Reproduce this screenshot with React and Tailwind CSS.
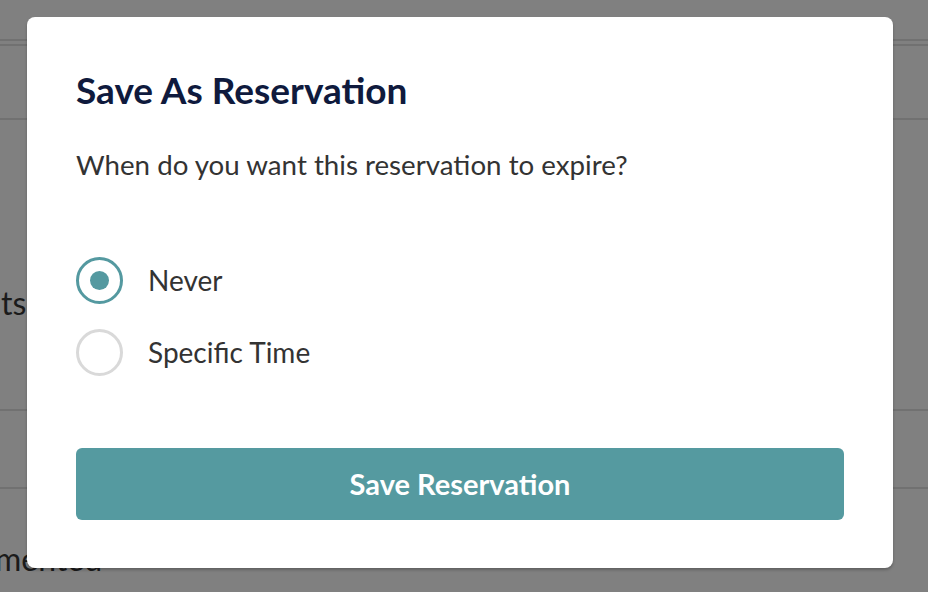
import React from "react";

function Radio({ checked, label }) {
    return (
        <label className="flex items-center h-[48px] gap-[25px] cursor-pointer">
            <span
                className={`flex items-center justify-center w-[47px] h-[47px] rounded-full border-[3px] ${
                    checked ? "border-[#5499a0]" : "border-[#d9d9d9]"
                }`}
            >
                {checked && <span className="w-[19px] h-[19px] rounded-full bg-[#5499a0]" />}
            </span>
            <span className="text-[28px] leading-[34px] text-[#333333]">{label}</span>
        </label>
    );
}

export default function App() {
    return (
        <div className="relative w-[928px] h-[592px] overflow-hidden bg-[#808080] font-['Lato',sans-serif]">
            {/* page behind the overlay */}
            <div className="flex flex-col">
                <div className="h-[39px]" />
                <div className="h-[2px] bg-[#717171]" />
                <div className="h-[3px]" />
                <div className="h-[2px] bg-[#717171]" />
                <div className="h-[72px]" />
                <div className="h-[2px] bg-[#717171]" />
                <div className="h-[289px] pt-[164px] pl-[1px] text-[32px] leading-[38px] text-[#1b1b1b]">ts</div>
                <div className="h-[2px] bg-[#717171]" />
                <div className="h-[76px]" />
                <div className="h-[2px] bg-[#717171]" />
                <div className="pt-[51px] -ml-[5px] text-[32px] leading-[38px] text-[#1b1b1b]">mented</div>
            </div>

            {/* modal */}
            <div className="absolute left-[27px] top-[17px] w-[866px] h-[551px] bg-white rounded-[8px] shadow-[0_2px_3px_rgba(0,0,0,0.25)] px-[49px] pt-[51px] flex flex-col">
                <h2 className="text-[37px] leading-[44px] font-bold text-[#0f1a3d]">Save As Reservation</h2>
                <p className="mt-[36px] text-[27.7px] leading-[34px] text-[#333333]">
                    When do you want this reservation to expire?
                </p>
                <div className="mt-[74px] flex flex-col gap-[24px]">
                    <Radio checked label="Never" />
                    <Radio label="Specific Time" />
                </div>
                <button className="mt-[72px] h-[72px] w-full rounded-[6px] bg-[#559aa0] text-white text-[29px] font-bold">
                    Save Reservation
                </button>
            </div>
        </div>
    );
}
